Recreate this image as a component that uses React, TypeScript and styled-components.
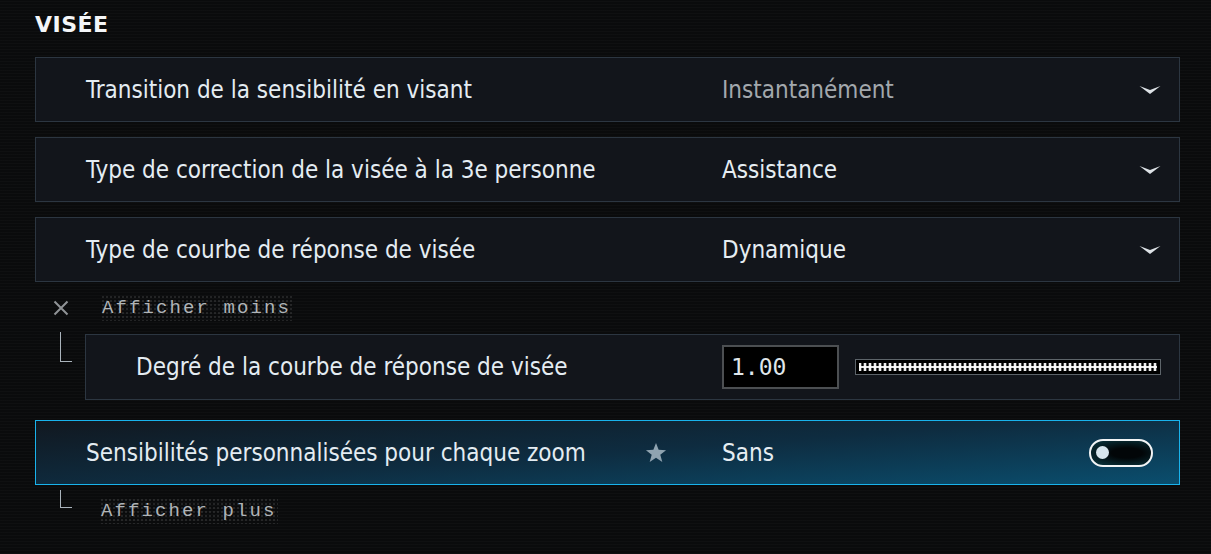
import styled, { createGlobalStyle, css } from "styled-components";

const GlobalStyle = createGlobalStyle`
    html, body {
        margin: 0;
        padding: 0;
        background: #0a0b0c;
    }
    body {
        font-family: "DejaVu Sans Condensed", "Liberation Sans", sans-serif;
        color: #e4ecf2;
    }
`;

const Page = styled.div`
    width: 1211px;
    height: 554px;
    box-sizing: border-box;
    padding: 8px 31px 0 35px;
    background-color: #0a0b0c;
    background-image: repeating-linear-gradient(0deg, rgba(255,255,255,0.018) 0 1px, transparent 1px 3px);
    overflow: hidden;
`;

const Title = styled.h2`
    margin: 0 0 15px;
    font-family: "DejaVu Sans", sans-serif;
    font-weight: bold;
    font-size: 22px;
    line-height: 34px;
    letter-spacing: 0.5px;
    color: #f4f6f8;
`;

const List = styled.div`
    display: flex;
    flex-direction: column;
`;

const Row = styled.div<{ $active?: boolean; $indent?: boolean; $gap?: number }>`
    display: flex;
    align-items: center;
    box-sizing: border-box;
    min-width: 0;
    height: ${p => (p.$indent ? 66 : 65)}px;
    margin-bottom: ${p => p.$gap ?? 0}px;
    padding-left: 50px;
    background: #12151b;
    border: 1px solid #2c3641;
    ${p => p.$indent && css`
        flex: 1;
        margin-left: 13px;
    `}
    ${p => p.$active && css`
        border-color: #19b3ec;
        background: linear-gradient(176deg, #111820 0%, #0e2c40 50%, #0a4e6e 100%);
    `}
`;

const Label = styled.div<{ $width?: number }>`
    width: ${p => p.$width ?? 636}px;
    flex-shrink: 0;
    font-size: 24px;
    color: #e4ecf2;
    display: flex;
    align-items: center;
`;

const Value = styled.div<{ $dim?: boolean }>`
    flex: 1;
    font-size: 24px;
    color: ${p => (p.$dim ? "#a3a8ad" : "#e6edf2")};
`;

const Chevron = styled.svg`
    width: 22px;
    height: 12px;
    margin-right: 18px;
`;

const StarBox = styled.span`
    margin-left: auto;
    margin-right: 55px;
    display: flex;
`;

const SubLine = styled.div`
    display: flex;
    align-items: center;
    height: 52px;
`;

const Branch = styled.div<{ $h?: number; $top?: number }>`
    flex-shrink: 0;
    width: 12px;
    height: ${p => p.$h ?? 30}px;
    margin-top: ${p => p.$top ?? 0}px;
    margin-left: 25px;
    box-sizing: border-box;
    border-left: 1px solid #aab4bc;
    border-bottom: 1px solid #aab4bc;
    align-self: flex-start;
`;

const XIcon = styled.svg`
    width: 16px;
    height: 16px;
    margin-left: 18px;
    margin-right: 32px;
`;

const Toggler = styled.span<{ $leaf?: boolean }>`
    margin-left: ${p => (p.$leaf ? 28 : 0)}px;
    padding: 2px 1px;
    font-family: "Liberation Mono", "DejaVu Sans Mono", monospace;
    font-size: 19px;
    letter-spacing: 2.1px;
    color: #b0b4b7;
    background-image: radial-gradient(circle, rgba(255,255,255,0.16) 0.6px, transparent 0.9px);
    background-size: 4px 4px;
`;

const SubArea = styled.div`
    display: flex;
    align-items: flex-start;
    margin-bottom: 20px;
`;

const NumberInput = styled.div`
    width: 117px;
    height: 44px;
    flex-shrink: 0;
    box-sizing: border-box;
    border: 2px solid #4c4f52;
    background: #000;
    display: flex;
    align-items: center;
    padding-left: 7px;
    font-family: "DejaVu Sans Mono", monospace;
    font-size: 23px;
    color: #dfe6ea;
    margin-right: 16px;
`;

const Slider = styled.div`
    width: 306px;
    height: 16px;
    flex-shrink: 0;
    box-sizing: border-box;
    border: 1px solid #5d646a;
    background: #000;
    padding: 3px;
    display: flex;
`;

const Ticks = styled.div`
    flex: 1;
    background:
        linear-gradient(to bottom, transparent 3px, rgba(255,255,255,0.9) 3px 5px, transparent 5px),
        repeating-linear-gradient(90deg, #f0f0f0 0 2px, #4a4a4a 2px 3px, #000 3px 4px, #4a4a4a 4px 5px);
`;

const Switch = styled.div`
    width: 64px;
    height: 28px;
    box-sizing: border-box;
    margin-right: 26px;
    border: 2px solid #f2f4f5;
    border-radius: 14px;
    background: radial-gradient(ellipse at 60% 50%, #020608 30%, #0a3a44 100%);
    display: flex;
    align-items: center;
    padding-left: 5px;
`;

const Knob = styled.span`
    width: 13px;
    height: 13px;
    border-radius: 50%;
    background: #d8e6ee;
`;

function ChevronIcon() {
	return (
		<Chevron viewBox="0 0 22 12">
			<path d="M0.5 2 L11 10 L21.5 2 L11 6 Z" fill="#dde2e6" />
		</Chevron>
	);
}

const selects = [
	{ label: "Transition de la sensibilité en visant", value: "Instantanément", dim: true },
	{ label: "Type de correction de la visée à la 3e personne", value: "Assistance" },
	{ label: "Type de courbe de réponse de visée", value: "Dynamique" },
];

function App() {
	return (
		<Page>
			<GlobalStyle />
			<Title>VISÉE</Title>
			<List>
				{selects.map((item, index) => (
					<Row key={item.label} $gap={index < 2 ? 15 : 0}>
						<Label>{item.label}</Label>
						<Value $dim={item.dim}>{item.value}</Value>
						<ChevronIcon />
					</Row>
				))}

				<SubLine>
					<XIcon viewBox="0 0 16 16">
						<path d="M1.5 1.5 L14.5 14.5 M14.5 1.5 L1.5 14.5" stroke="#8f9396" strokeWidth="2" />
					</XIcon>
					<Toggler>Afficher moins</Toggler>
				</SubLine>

				<SubArea>
					<Branch $top={-2} />
					<Row $indent>
						<Label $width={586}>Degré de la courbe de réponse de visée</Label>
						<NumberInput>1.00</NumberInput>
						<Slider><Ticks /></Slider>
					</Row>
				</SubArea>

				<Row $active>
					<Label>
						Sensibilités personnalisées pour chaque zoom
						<StarBox>
							<svg width="22" height="21" viewBox="0 0 24 23">
								<path d="M12 1 L14.9 8.6 L23 8.9 L16.7 13.9 L18.9 21.8 L12 17.3 L5.1 21.8 L7.3 13.9 L1 8.9 L9.1 8.6 Z" fill="#8fa3b0" />
							</svg>
						</StarBox>
					</Label>
					<Value>Sans</Value>
					<Switch><Knob /></Switch>
				</Row>

				<SubLine>
					<Branch $h={18} $top={5} />
					<Toggler $leaf>Afficher plus</Toggler>
				</SubLine>
			</List>
		</Page>
	);
}

export default App;
